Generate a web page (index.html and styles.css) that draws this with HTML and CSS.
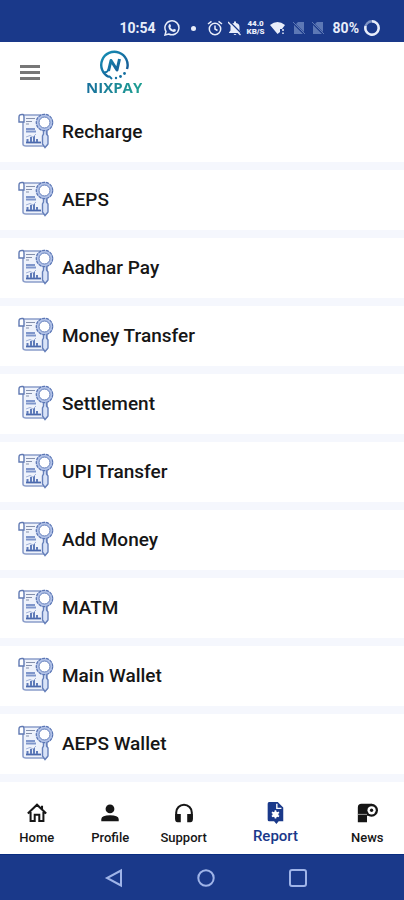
FILE: index.html
```
<!DOCTYPE html>
<html lang="en">
<head>
<meta charset="utf-8">
<meta name="viewport" content="width=device-width, initial-scale=1">
<title>NixPay Reports</title>
<link rel="stylesheet" href="styles.css">
</head>
<body>
<svg class="sprite" aria-hidden="true">
  <symbol id="report" viewBox="0 0 36 36">
    <path d="M5 2H29V31Q29 33 27 33H8Q5 33 5 31V9" fill="#eef2fb" stroke="#8b9dca" stroke-width="1.600"/>
    <path d="M5 1.500Q1 1 1 4V9H6V4Q6 2 5 1.500Z" fill="#fff" stroke="#6079b3" stroke-width="1.400"/>
    <path d="M8 5.500H17M8 8.500H14M8 11H11" stroke="#8490ac" stroke-width="1.200"/>
    <path d="M8 16H17M8 18.500H18" stroke="#7f96cb" stroke-width="1.800"/>
    <path d="M8 29.500H23" stroke="#4b69ad" stroke-width="1.800"/>
    <path d="M9.500 29V26M13 29V24M16 29V23M19 29V26" stroke="#5f7bb9" stroke-width="2"/>
    <path d="M8 24L12 22.500L15 24L18 21" fill="none" stroke="#a2b2d9"/>
    <path d="M25.500 17H28.500V21L30 23V31L27 34.500L24.500 31V23L25.500 21Z" fill="#d9e3f8" stroke="#6680ba" stroke-width="1.400"/>
    <circle cx="26.500" cy="9.500" r="7" fill="#fff" stroke="#b3c3e8" stroke-width="3.500"/>
    <circle cx="26.500" cy="9.500" r="8.200" fill="none" stroke="#5a75b3" stroke-width="1.200" stroke-dasharray="3 1"/>
    <circle cx="26.500" cy="9.500" r="5.500" fill="none" stroke="#6a84be" stroke-width="1"/>
  </symbol>
</svg>
<div class="app">
  <div class="status">
    <span class="time">10:54</span>
    <svg class="whatsapp" viewBox="0 0 16 16"><path d="M1 15L2 11.500A7 7 0 1 1 4.700 14Z" fill="none" stroke="currentColor" stroke-width="1.500"/><path d="M5 4.500Q6 3.500 6.700 5L7 6.300L6.300 7.200Q7.300 9 9 9.700L10 8.700L12 9.700Q12 12 9.700 12Q5 11 4.300 6.500Z" fill="currentColor"/></svg>
    <span class="dot"></span>
    <svg class="alarm" viewBox="0 0 16 16" fill="none" stroke="currentColor" stroke-width="1.500"><circle cx="8" cy="9" r="5.700"/><path d="M8 5.500V9L10.500 10.500M1 4L4.500 1.300M11.500 1.300L15 4"/></svg>
    <svg class="bell" viewBox="0 0 14 16"><path d="M1 12.500L2.500 10.500V7Q2.500 3.500 6 3V1.500H8V3Q11.500 3.500 11.500 7V10.500L13 12.500V13H1ZM5.500 14H8.500Q7 16 5.500 14Z" fill="currentColor"/><path d="M1 1L14 14" stroke="#1a398a" stroke-width="1.300"/><path d="M0 2L12.500 15" stroke="currentColor" stroke-width="1.300"/></svg>
    <span class="speed"><b>44.0</b><b>KB/S</b></span>
    <svg class="wifi" viewBox="0 0 16 14"><path d="M0 4Q7.500 -2 15 4L12 8H10V11L7.500 13Z" fill="currentColor"/><path d="M13 8V10M13 11.500V13" stroke="currentColor" stroke-width="1.500"/></svg>
    <svg class="sim" viewBox="0 0 12 14"><path d="M5 1H11V11L3 3ZM1 4L10 13H1Z" fill="currentColor"/><path d="M0 1L12 13" stroke="currentColor"/></svg>
    <svg class="sim" viewBox="0 0 12 14"><path d="M5 1H11V11L3 3ZM1 4L10 13H1Z" fill="currentColor"/><path d="M0 1L12 13" stroke="currentColor"/></svg>
    <span class="battery">80%</span>
    <svg class="ring" viewBox="0 0 16 16" fill="none" stroke-width="2.400"><circle cx="8" cy="8" r="6.700" stroke="#7f94c5"/><path d="M8 1.300A6.700 6.700 0 1 1 1.600 6" stroke="currentColor"/></svg>
  </div>

  <header class="header">
    <button class="menu" type="button" aria-label="Menu"><span></span><span></span><span></span></button>
    <div class="logo">
      <svg viewBox="0 0 32 30" fill="none">
        <defs><linearGradient id="mark" gradientUnits="userSpaceOnUse" x1="4" y1="2" x2="28" y2="28"><stop offset="0" stop-color="#1690b5"/><stop offset="1" stop-color="#15508f"/></linearGradient></defs>
        <path d="M11 27A13.200 13.200 0 1 1 29 19" stroke="url(#mark)" stroke-width="2.400"/>
        <path d="M10.500 21L13 10.500L19 20L21.500 9" stroke="url(#mark)" stroke-width="3" stroke-linejoin="round"/>
        <path d="M6 22Q9 23 11 19M11 26L14 29" stroke="#1473a4" stroke-width="1.800"/>
        <g fill="#146fa0"><circle cx="18" cy="28" r="1.200"/><circle cx="22.500" cy="26.500" r="1.400"/><circle cx="26.500" cy="23.500" r="1.400"/></g>
      </svg>
      <span class="wordmark">NIXPAY</span>
    </div>
  </header>

  <main>
    <ul class="list">
      <li><a href="#recharge"><svg><use href="#report"/></svg>Recharge</a></li>
      <li><a href="#aeps"><svg><use href="#report"/></svg>AEPS</a></li>
      <li><a href="#aadhar"><svg><use href="#report"/></svg>Aadhar Pay</a></li>
      <li><a href="#transfer"><svg><use href="#report"/></svg>Money Transfer</a></li>
      <li><a href="#settlement"><svg><use href="#report"/></svg>Settlement</a></li>
      <li><a href="#upi"><svg><use href="#report"/></svg>UPI Transfer</a></li>
      <li><a href="#add"><svg><use href="#report"/></svg>Add Money</a></li>
      <li><a href="#matm"><svg><use href="#report"/></svg>MATM</a></li>
      <li><a href="#main"><svg><use href="#report"/></svg>Main Wallet</a></li>
      <li><a href="#aeps-wallet"><svg><use href="#report"/></svg>AEPS Wallet</a></li>
    </ul>
  </main>

  <nav class="tabs">
    <a href="#home"><svg viewBox="0 0 24 24" fill="none" stroke="currentColor" stroke-width="2.200"><path d="M2 12.500L12 3L22 12.500M5 11V20.800H9.500V14H14.500V20.800H19V11M17.500 8V4"/></svg>Home</a>
    <a href="#profile"><svg viewBox="0 0 24 24" fill="currentColor"><circle cx="12" cy="7.500" r="4.800"/><path d="M2.500 21V18.500Q3 14.500 12 14.500T21.500 18.500V21Z"/></svg>Profile</a>
    <a href="#support"><svg viewBox="0 0 24 24"><path d="M3.500 19V11.500A8.500 8.500 0 0 1 20.500 11.500V19" fill="none" stroke="currentColor" stroke-width="2.200"/><path d="M2.400 13H8.500V22H5Q2.400 22 2.400 19ZM15.500 13H21.600V19Q21.600 22 19 22H15.500Z" fill="currentColor"/></svg>Support</a>
    <a class="active" href="#report-tab" aria-current="page"><svg viewBox="0 0 24 24"><path d="M5.500 0H15L21 6V21H16L13.500 24L11 21H5.500Q4 21 4 19V2Q4 0 5.500 0Z" fill="currentColor"/><path d="M14 2V7H19" fill="none" stroke="#fff" stroke-width="1.500"/><circle cx="12.500" cy="13.500" r="3.200" fill="#fff"/><path d="M12.500 9V18M8.600 11.200L16.400 15.800M8.600 15.800L16.400 11.200" stroke="#fff" stroke-width="1.800"/></svg>Report</a>
    <a href="#news"><svg viewBox="0 0 24 24"><path d="M2 6Q2 2 6 2H17V15H12V22H2Z" fill="currentColor"/><circle cx="17" cy="9" r="7" fill="currentColor"/><circle cx="17" cy="9" r="4.500" fill="#fff"/><circle cx="17" cy="9" r="1.800" fill="currentColor"/><path d="M2 13.500H12" stroke="#aaa"/></svg>News</a>
  </nav>

  <div class="system">
    <button type="button" aria-label="Back"><svg viewBox="0 0 20 20"><path d="M17 2.500V17.500L3 10Z"/></svg></button>
    <button type="button" aria-label="Home screen"><svg viewBox="0 0 20 20"><circle cx="10" cy="10" r="7.700"/></svg></button>
    <button type="button" aria-label="Recent apps"><svg viewBox="0 0 20 20"><rect x="2" y="2" width="16" height="16" rx="2"/></svg></button>
  </div>
</div>
</body>
</html>
```
FILE: styles.css
```
* { box-sizing: border-box; }
body {
  margin: 0;
  background: #fff;
  color: #161616;
  font-family: Roboto, "Liberation Sans", sans-serif;
}
a { color: inherit; text-decoration: none; }
button { border: 0; padding: 0; background: none; }
svg { display: block; flex: none; }
.sprite { position: absolute; width: 0; height: 0; }
.app { display: flex; flex-direction: column; min-height: 100vh; }

.status {
  display: flex;
  align-items: center;
  justify-content: flex-end;
  gap: 5px;
  padding: 14px 24px 0 0;
  height: 42px;
  background: #1a398a;
  color: #e8edfa;
  font-size: 14px;
  font-weight: 700;
}
.whatsapp { width: 16px; height: 16px; margin: 0 6px 0 3px; }
.dot { width: 5px; height: 5px; border-radius: 50%; background: currentColor; margin-right: 6px; }
.alarm { width: 16px; height: 16px; }
.bell { width: 14px; height: 16px; }
.speed { display: flex; flex-direction: column; align-items: center; width: 18px; font-size: 8px; line-height: 8px; }
.wifi { width: 16px; height: 14px; }
.sim { width: 12px; height: 14px; margin-left: 2px; color: #5d78b5; }
.battery { margin-left: 4px; }
.ring { width: 16px; height: 16px; }

.header { display: flex; align-items: flex-start; gap: 46px; height: 60px; padding: 8px 20px; }
.menu { display: flex; flex-direction: column; gap: 3px; padding-top: 15px; }
.menu span { width: 20px; height: 3px; background: #777; }
.logo { display: flex; flex-direction: column; align-items: center; }
.logo svg { width: 32px; height: 30px; }
.wordmark {
  font-size: 15px;
  font-family: "Open Sans", sans-serif;
  line-height: 14px;
  font-weight: 700;
  color: transparent;
  background: linear-gradient(90deg, #176f9c, #20a092);
  background-clip: text;
}

main { flex: 1; }
.list { margin: 0; padding: 0; list-style: none; }
.list li { border-bottom: 8px solid #f5f7fd; }
.list a {
  display: flex;
  align-items: center;
  gap: 8px;
  height: 60px;
  padding: 0 18px 2px;
  font-size: 19px;
  font-weight: 500;
}
.list svg { width: 36px; height: 36px; }

.tabs { display: flex; height: 72px; color: #161616; }
.tabs a {
  flex: 1;
  display: flex;
  flex-direction: column;
  align-items: center;
  gap: 6px;
  padding-top: 20px;
  font-size: 13px;
  line-height: 16px;
  font-weight: 500;
}
.tabs svg { width: 22px; height: 22px; }
.tabs .active { flex: 1.5; gap: 4px; font-size: 15px; color: #1a398a; }

.system {
  display: flex;
  align-items: center;
  justify-content: center;
  gap: 72px;
  height: 46px;
  padding-left: 8px;
  background: #1a398a;
  border-top: 1px solid #092c80;
}
.system svg { width: 20px; height: 20px; fill: none; stroke: #9fb4e8; stroke-width: 2; }
```
